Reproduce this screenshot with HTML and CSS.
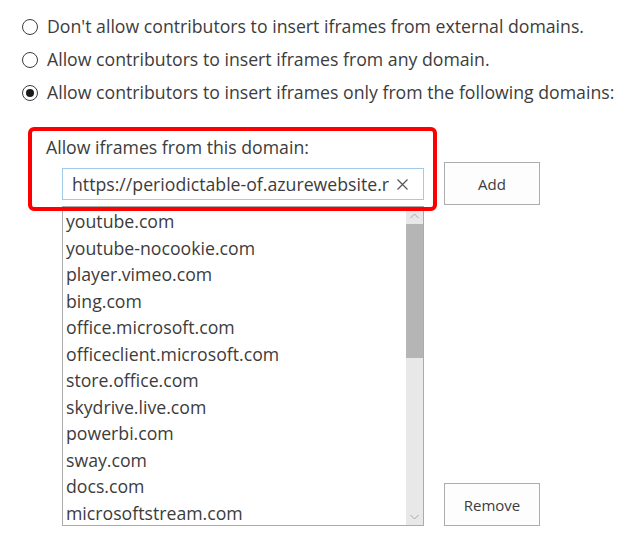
FILE: index.html
```html
<!DOCTYPE html>
<html lang="en">
<head>
<meta charset="utf-8">
<title>Iframe domains</title>
<link rel="stylesheet" href="styles.css">
</head>
<body>
<div class="page">
  <div class="options">
    <div class="opt"><span class="radio"></span><span>Don't allow contributors to insert iframes from external domains.</span></div>
    <div class="opt"><span class="radio"></span><span>Allow contributors to insert iframes from any domain.</span></div>
    <div class="opt"><span class="radio checked"></span><span>Allow contributors to insert iframes only from the following domains:</span></div>
  </div>
  <div class="domains">
    <div class="label">Allow iframes from this domain:</div>
    <div class="row">
      <div class="input"><span class="val">https://periodictable-of.azurewebsite.r</span><svg class="clear" width="11" height="11" viewBox="0 0 11 11"><path d="M0.5 0.5L10.5 10.5M10.5 0.5L0.5 10.5" fill="none" stroke="#555" stroke-width="1.2"/></svg></div>
      <button class="btn">Add</button>
    </div>
    <div class="row list-row">
      <div class="list">
        <ul class="items">
          <li>youtube.com</li>
          <li>youtube-nocookie.com</li>
          <li>player.vimeo.com</li>
          <li>bing.com</li>
          <li>office.microsoft.com</li>
          <li>officeclient.microsoft.com</li>
          <li>store.office.com</li>
          <li>skydrive.live.com</li>
          <li>powerbi.com</li>
          <li>sway.com</li>
          <li>docs.com</li>
          <li>microsoftstream.com</li>
        </ul>
        <div class="scrollbar">
          <div class="arrow up"><svg width="9" height="6" viewBox="0 0 9 6"><path d="M0.5 5L4.5 1L8.5 5" fill="none" stroke="#a8a8a8" stroke-width="1"/></svg></div>
          <div class="thumb"></div>
          <div class="track"></div>
          <div class="arrow down"><svg width="9" height="6" viewBox="0 0 9 6"><path d="M0.5 1L4.5 5L8.5 1" fill="none" stroke="#a8a8a8" stroke-width="1"/></svg></div>
        </div>
      </div>
      <button class="btn">Remove</button>
    </div>
    <div class="highlight"></div>
  </div>
</div>
</body>
</html>
```

FILE: styles.css
```css
html, body {
  margin: 0;
  padding: 0;
  background: #ffffff;
}
.page {
  position: relative;
  font-family: "Open Sans", "Noto Sans", sans-serif;
  font-size: 17.7px;
  color: #3c3c3c;
  width: 633px;
  height: 554px;
  overflow: hidden;
}
.options {
  padding-top: 10px;
  padding-left: 22px;
}
.opt {
  display: flex;
  align-items: center;
  height: 33px;
  line-height: 33px;
  white-space: nowrap;
}
.radio {
  width: 14px;
  height: 14px;
  border: 1px solid #3c3c3c;
  border-radius: 50%;
  margin-right: 9px;
  flex: none;
  display: flex;
  align-items: center;
  justify-content: center;
}
.radio.checked::after {
  content: "";
  width: 8px;
  height: 8px;
  border-radius: 50%;
  background: #1a1a1a;
}
.domains {
  position: relative;
  margin-top: 26px;
}
.label {
  padding-left: 46px;
  line-height: 24px;
  height: 24px;
  margin-bottom: 3px;
}
.row {
  display: flex;
  align-items: flex-start;
  padding-left: 62px;
}
.input {
  margin-top: 6px;
  width: 362px;
  height: 32px;
  box-sizing: border-box;
  border: 1px solid #a3cbe8;
  display: flex;
  align-items: center;
  padding-left: 9px;
  padding-right: 15px;
  white-space: nowrap;
}
.val {
  flex: 1;
  overflow: hidden;
}
.clear {
  flex: none;
  margin-left: 8px;
}
.btn {
  margin-left: 20px;
  width: 96px;
  height: 43px;
  border: 1px solid #adadad;
  background: #fdfdfd;
  font-family: "Open Sans", "Noto Sans", sans-serif;
  font-size: 15px;
  color: #3c3c3c;
  padding: 0;
}
.list-row {
  margin-top: 1px;
  align-items: flex-end;
}
.list {
  width: 362px;
  height: 320px;
  box-sizing: border-box;
  border: 1px solid #ababab;
  display: flex;
  overflow: hidden;
}
.items {
  flex: 1;
  list-style: none;
  margin: 0;
  padding: 1px 0 0 3px;
}
.items li {
  height: 26.5px;
  line-height: 26.5px;
  white-space: nowrap;
}
.scrollbar {
  width: 17px;
  display: flex;
  flex-direction: column;
  background: #e8e8e8;
}
.arrow {
  height: 17px;
  display: flex;
  align-items: center;
  justify-content: center;
  flex: none;
}
.thumb {
  height: 134px;
  background: #b5b5b5;
  flex: none;
}
.track {
  flex: 1;
}
.highlight {
  position: absolute;
  left: 28px;
  top: -8px;
  width: 409px;
  height: 84px;
  box-sizing: border-box;
  border: 4px solid #ff0000;
  border-radius: 6px;
  pointer-events: none;
}
```
